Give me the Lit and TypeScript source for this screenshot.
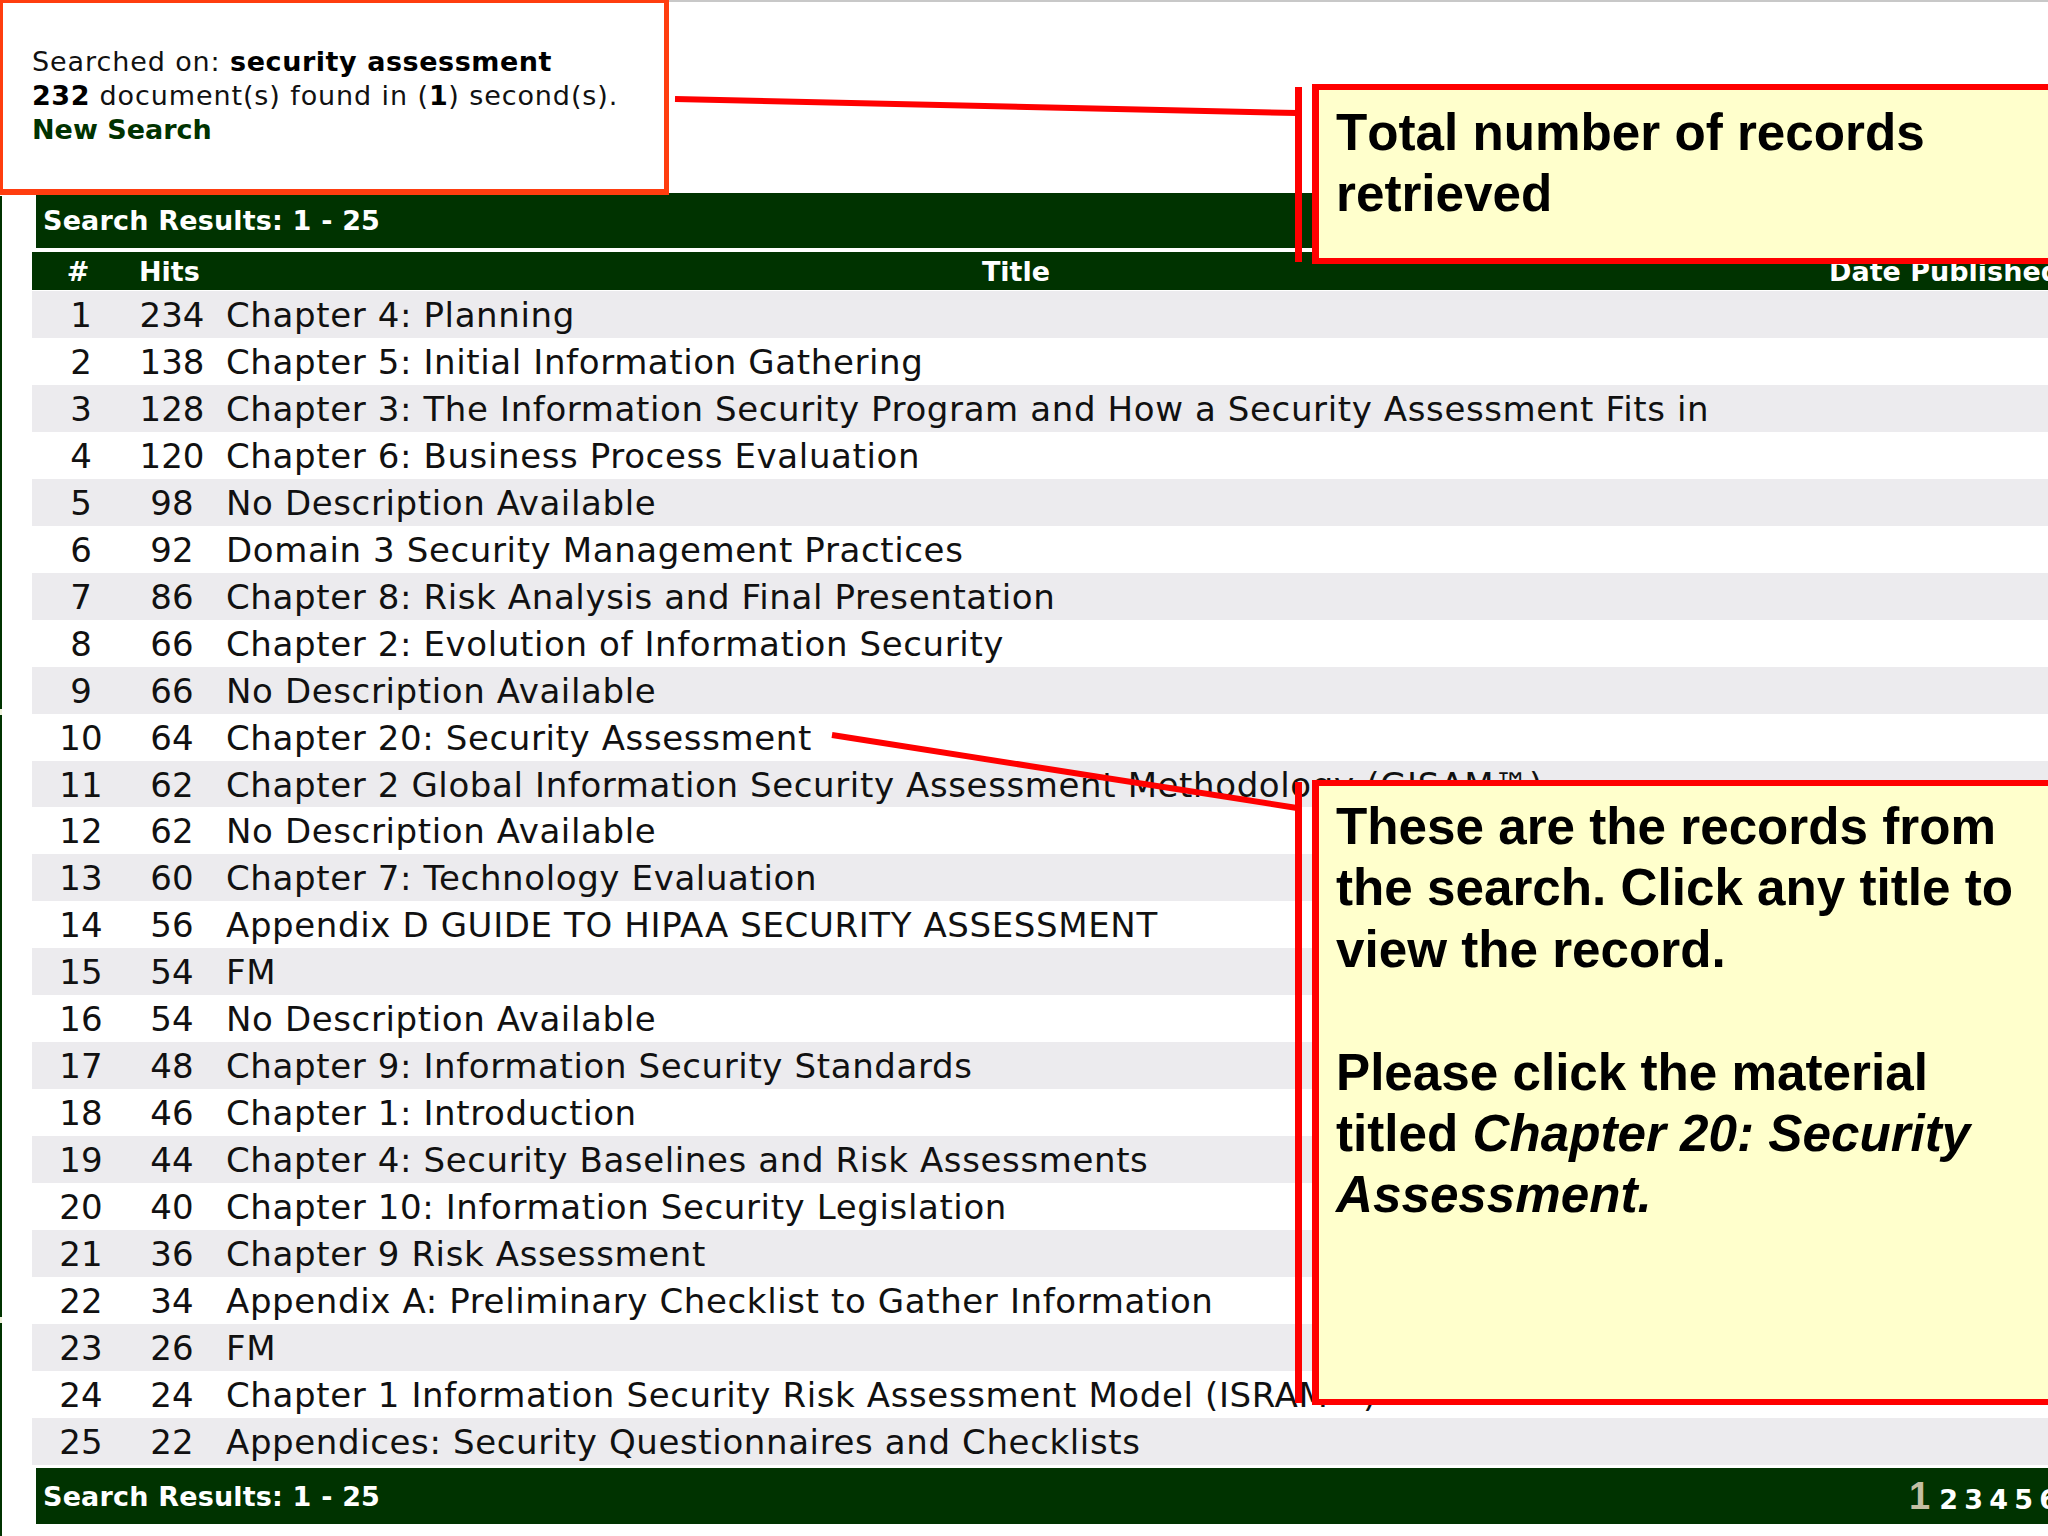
import { LitElement, html, css, svg } from "lit";
import { customElement } from "lit/decorators.js";

const ROWS: [number, string][] = [
  [234, "Chapter 4: Planning"],
  [138, "Chapter 5: Initial Information Gathering"],
  [128, "Chapter 3: The Information Security Program and How a Security Assessment Fits in"],
  [120, "Chapter 6: Business Process Evaluation"],
  [98, "No Description Available"],
  [92, "Domain 3 Security Management Practices"],
  [86, "Chapter 8: Risk Analysis and Final Presentation"],
  [66, "Chapter 2: Evolution of Information Security"],
  [66, "No Description Available"],
  [64, "Chapter 20: Security Assessment"],
  [62, "Chapter 2 Global Information Security Assessment Methodology (GISAM™)"],
  [62, "No Description Available"],
  [60, "Chapter 7: Technology Evaluation"],
  [56, "Appendix D GUIDE TO HIPAA SECURITY ASSESSMENT"],
  [54, "FM"],
  [54, "No Description Available"],
  [48, "Chapter 9: Information Security Standards"],
  [46, "Chapter 1: Introduction"],
  [44, "Chapter 4: Security Baselines and Risk Assessments"],
  [40, "Chapter 10: Information Security Legislation"],
  [36, "Chapter 9 Risk Assessment"],
  [34, "Appendix A: Preliminary Checklist to Gather Information"],
  [26, "FM"],
  [24, "Chapter 1 Information Security Risk Assessment Model (ISRAM™)"],
  [22, "Appendices: Security Questionnaires and Checklists"],
];

@customElement("app-root")
export class AppRoot extends LitElement {
  static styles = css`
    :host {
      display: block;
      position: relative;
      width: 2048px;
      height: 1536px;
      overflow: hidden;
      background: #fff;
      font-family: "DejaVu Sans", sans-serif;
      color: #111;
    }
    .topline {
      position: absolute;
      left: 668px;
      right: 0;
      top: 0;
      height: 2px;
      background: #c8c8c8;
    }
    .edge {
      position: absolute;
      left: 0;
      top: 196px;
      bottom: 0;
      width: 2px;
      background: linear-gradient(
        to bottom,
        #003300 0 513px,
        #eef2dc 513px 519px,
        #003300 519px 1121px,
        #eef2dc 1121px 1127px,
        #003300 1127px
      );
    }
    .info {
      position: relative;
      z-index: 1;
      box-sizing: border-box;
      width: 669px;
      height: 195px;
      margin-bottom: -2px;
      background: #fff;
      border: 3px solid #ff3d0f;
      border-right-width: 5px;
      border-bottom-width: 6px;
      padding: 42px 0 0 29px;
      font-size: 27px;
      line-height: 34px;
      letter-spacing: 0.9px;
    }
    .info b { color: #000; letter-spacing: 0.55px; }
    .info .link { color: #003300; font-weight: bold; letter-spacing: 0; }
    .bar {
      display: flex;
      align-items: center;
      justify-content: space-between;
      margin-left: 36px;
      width: 2040px;
      height: 55px;
      padding: 0 0 0 7px;
      box-sizing: border-box;
      background: #003300;
      color: #fff;
      font-size: 27px;
      font-weight: bold;
      letter-spacing: 0.18px;
    }
    .head {
      display: flex;
      align-items: center;
      margin: 4px 0 1px 32px;
      width: 2040px;
      height: 38px;
      background: #003300;
      color: #fff;
      font-size: 27px;
      font-weight: bold;
      white-space: nowrap;
    }
    .head .n { width: 92px; text-align: center; }
    .head .h { width: 94px; padding-left: 15px; box-sizing: border-box; }
    .head .t { width: 1596px; text-align: center; }
    .head .d { padding-left: 15px; }
    .rows { margin-left: 32px; width: 2040px; }
    .row {
      display: flex;
      align-items: center;
      box-sizing: border-box;
      height: 46.96px;
      padding-top: 1px;
      font-size: 34px;
      letter-spacing: 0.62px;
      white-space: nowrap;
      overflow: hidden;
    }
    .row.odd { background: #ecebee; }
    .row .n { width: 96px; padding-left: 2px; box-sizing: border-box; text-align: center; letter-spacing: 0; }
    .row .h { width: 88px; text-align: center; letter-spacing: 0; }
    .row .t { margin-left: 10px; }
    .foot { margin-top: 3px; height: 56px; padding-top: 1px; }
    .pages {
      display: flex;
      align-items: flex-end;
      gap: 6.2px;
      width: 171px;
      flex: none;
      margin-left: auto;
      letter-spacing: 0;
      white-space: nowrap;
    }
    .pages .cur {
      font-family: "Liberation Sans", Arial, sans-serif;
      font-size: 38px;
      color: #c4bfa3;
      line-height: 38px;
      margin: 0 3px 0 4px;
    }
    .pages span { font-size: 27px; line-height: 30px; }
    svg.lines {
      position: absolute;
      inset: 0;
      width: 2048px;
      height: 1536px;
      pointer-events: none;
    }
    .callout {
      position: absolute;
      left: 1312px;
      width: 760px;
      box-sizing: border-box;
      border: 6px solid #ff0000;
      border-left-width: 7px;
      background: #ffffcc;
      color: #000;
      font-family: "Liberation Sans", Arial, sans-serif;
      font-weight: bold;
      font-kerning: none;
      font-size: 51.2px;
      line-height: 61.4px;
      padding: 12px 24px 0 17px;
    }
    .c1 { top: 84px; height: 180px; }
    .c2 { top: 780px; height: 625px; padding-top: 10px; }
    .callout p { margin: 0; width: 705px; }
    .callout p + p { margin-top: 61.4px; }
  `;

  render() {
    return html`
      <div class="topline"></div>
      <div class="edge"></div>
      <div class="info">
        Searched on: <b>security assessment</b><br />
        <b>232</b> document(s) found in (<b>1</b>) second(s).<br />
        <span class="link">New Search</span>
      </div>
      <div class="bar">Search Results: 1 - 25</div>
      <div class="head">
        <div class="n">#</div>
        <div class="h">Hits</div>
        <div class="t">Title</div>
        <div class="d">Date Published</div>
      </div>
      <div class="rows">
        ${ROWS.map(
          (r, i) => html`<div class="row ${i % 2 === 0 ? "odd" : ""}">
            <div class="n">${i + 1}</div>
            <div class="h">${r[0]}</div>
            <div class="t">${r[1]}</div>
          </div>`
        )}
      </div>
      <div class="bar foot">
        Search Results: 1 - 25
        <div class="pages">
          <span class="cur">1</span><span>2</span><span>3</span><span>4</span><span>5</span><span>6</span>
        </div>
      </div>
      <svg class="lines" viewBox="0 0 2048 1536">
        ${svg`<line x1="675" y1="99" x2="1297" y2="113" stroke="#f00" stroke-width="6"></line>
        <line x1="832" y1="735" x2="1297" y2="808" stroke="#f00" stroke-width="6"></line>
        <rect x="1295" y="87" width="7" height="175" fill="#f00"></rect>
        <rect x="1295" y="782" width="7" height="621" fill="#f00"></rect>`}
      </svg>
      <div class="callout c1"><p>Total number of records retrieved</p></div>
      <div class="callout c2">
        <p>These are the records from the search. Click any title to view the record.</p>
        <p>Please click the material titled <i>Chapter 20: Security Assessment.</i></p>
      </div>
    `;
  }
}
